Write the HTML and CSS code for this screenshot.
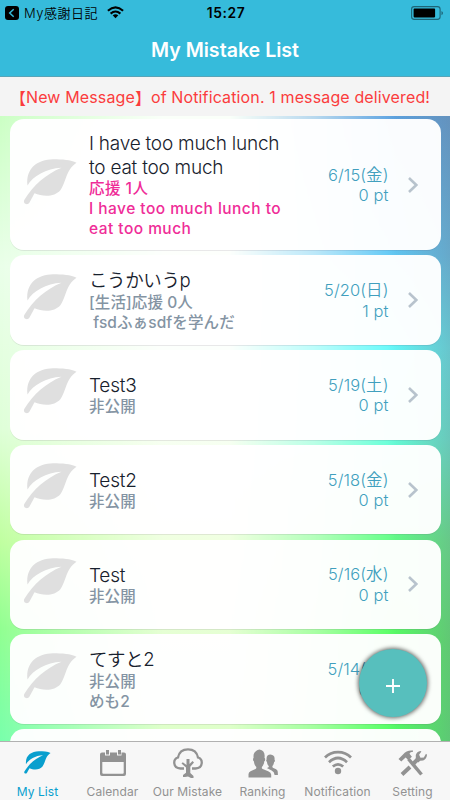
FILE: index.html
```html
<!DOCTYPE html>
<html lang="ja">
<head>
<meta charset="utf-8">
<title>My Mistake List</title>
<link rel="stylesheet" href="styles.css">
</head>
<body>
<svg class="defs" width="0" height="0" aria-hidden="true">
  <symbol id="leaf" viewBox="0 0 53 46" overflow="visible">
    <path d="M52.500 3.800C47 .8 38 .3 29 .3 14 .5 1.500 9 3.500 26.500 9 17 22 9.500 37.500 8.700 22 15 9 26.500.3 41-1.500 44.500 3.500 47 5.500 43.500L10.500 34.300C19 38 31 38 36.500 31 42.500 23 41.500 11 52.500 3.800Z"/>
  </symbol>
  <symbol id="chev" viewBox="0 0 12 18"><path d="M2 2L9.300 9 2 16" fill="none" stroke="currentColor" stroke-width="2.600"/></symbol>
</svg>
<div class="app">
  <header class="top">
    <div class="status">
      <div class="back">
        <svg width="14" height="14" viewBox="0 0 14 14"><rect width="14" height="14" rx="3"/><path d="M8.700 3.200L4.700 7l4 3.800" fill="none" stroke="#36bbdb" stroke-width="1.500"/></svg>
        <span class="back-label">My感謝日記</span>
        <svg class="wifi" width="17" height="13" viewBox="0 0 17 13"><g fill="none" stroke="#000" stroke-width="2.100"><path d="M.9 4.700Q8.500-1.900 16.100 4.700"/><path d="M3.600 7.600Q8.500 3.400 13.400 7.600"/></g><path d="M5.700 9.300Q8.500 7.200 11.300 9.300L8.500 12.200Z"/></svg>
      </div>
      <span class="clock">15:27</span>
      <svg class="battery" width="33" height="14" viewBox="0 0 33 14"><rect x=".6" y=".6" width="28.500" height="12.800" rx="2.600" fill="none" stroke="#1d6577" stroke-width="1.100"/><rect x="2.600" y="2.600" width="21.500" height="8.800" rx=".8"/><path d="M30.500 5v4.200q1.500-.8 1.500-2.100t-1.500-2.100" fill="#1d6577"/></svg>
    </div>
    <h1 class="title">My Mistake List</h1>
  </header>
  <div class="notice"><span class="bracket">【</span>New Message<span class="bracket">】</span><span>of Notification. 1 message delivered!</span></div>
  <main class="list">
    <article class="card tall">
      <svg class="leaf"><use href="#leaf"/></svg>
      <div class="body"><h2>I have too much lunch<br>to eat too much</h2><p class="pink">応援 1人<br>I have too much lunch to<br>eat too much</p></div>
      <div class="meta">6/15(金)<br>0 pt</div><svg class="chev"><use href="#chev"/></svg>
    </article>
    <article class="card">
      <svg class="leaf"><use href="#leaf"/></svg>
      <div class="body"><h2 class="kana">こうかいうp</h2><p>[生活]応援 0人<br>&nbsp;fsdふぁsdfを学んだ</p></div>
      <div class="meta">5/20(日)<br>1 pt</div><svg class="chev"><use href="#chev"/></svg>
    </article>
    <article class="card">
      <svg class="leaf"><use href="#leaf"/></svg>
      <div class="body"><h2>Test3</h2><p>非公開</p></div>
      <div class="meta">5/19(土)<br>0 pt</div><svg class="chev"><use href="#chev"/></svg>
    </article>
    <article class="card">
      <svg class="leaf"><use href="#leaf"/></svg>
      <div class="body"><h2>Test2</h2><p>非公開</p></div>
      <div class="meta">5/18(金)<br>0 pt</div><svg class="chev"><use href="#chev"/></svg>
    </article>
    <article class="card">
      <svg class="leaf"><use href="#leaf"/></svg>
      <div class="body"><h2>Test</h2><p>非公開</p></div>
      <div class="meta">5/16(水)<br>0 pt</div><svg class="chev"><use href="#chev"/></svg>
    </article>
    <article class="card">
      <svg class="leaf"><use href="#leaf"/></svg>
      <div class="body"><h2 class="kana">てすと2</h2><p>非公開<br>めも2</p></div>
      <div class="meta">5/14(月)<br>0 pt</div><svg class="chev"><use href="#chev"/></svg>
    </article>
    <article class="card"></article>
    <button class="fab" aria-label="Add"><svg width="14" height="14" viewBox="0 0 14 14"><path d="M7 0v14M0 7h14" stroke="#fff" stroke-width="1.900"/></svg></button>
  </main>
  <nav class="tabs">
    <a class="tab active"><svg class="tab-leaf" width="27" height="23" viewBox="0 0 53 46"><use href="#leaf" width="53" height="46"/></svg><span>My List</span></a>
    <a class="tab"><svg width="28" height="28" viewBox="0 0 28 28"><path fill-rule="evenodd" d="M3 3.500h3v3h5v-3h7v3h4.500v-3H25q2 0 2 2V25q0 2-2 2H3q-2 0-2-2V5.500q0-2 2-2zM3.300 13v10.800q0 1 1 1h19.400q1 0 1-1V13z"/><path d="M7 1h3v4.500H7zM19 1h3v4.500h-3z"/></svg><span>Calendar</span></a>
    <a class="tab"><svg width="30" height="30" viewBox="0 0 30 30"><path d="M11 20.500H7.500C-.5 20-.2 11 5 9.500 6 4 10 1.300 15 1.300S24 4 25 9.500C30.200 11 30.500 20 22.500 20.500H19" fill="none" stroke="currentColor" stroke-width="2.300"/><path d="M13.500 11h3v5l3-3 1.500 1.500-3.700 4.300v6.300l3.200 3v1.900h-2.500L15 28.500 12 29h-2V27l3-2.200v-5.300L8.500 15.500l1.300-1.300 3.700 2.800z"/></svg><span>Our Mistake</span></a>
    <a class="tab"><svg width="30" height="29" viewBox="0 0 30 29"><path d="M.5 28.500v-3.300q0-2 2-3l5-2.200q1-.5.8-2C6.500 16 6 14 6 12.500q-1-.5-1-2.300 0-1 .6-1.500C5 4 7.500 1.500 11.500.5c4 .5 5.700 3.700 5 8.200q.7.500.7 1.500 0 1.800-1 2.300c0 1.500-.6 3.500-2.300 5.500-.2 1.500 0 1.500.8 2l5.500 2.200q3 1.300 3 3.600v2.700z"/><path d="M18.800 19c1.200-.4 2.100-.8 2-2-1.200-1-1.700-2.500-1.800-4-1-.4-1-2-.4-2.600C18.200 7 19.800 5.800 22.500 5.500c3 .3 4.500 2 4 5 .7.700.5 2.200-.4 2.600-.2 1.500-.7 3-1.700 4 0 1.200 0 1.500 1 2q3.500 1.500 4 2.400.5.800.5 4.500h-3.300q-.2-3.300-3-4.500z"/></svg><span>Ranking</span></a>
    <a class="tab"><svg width="28" height="28" viewBox="0 0 28 28"><g fill="none" stroke="currentColor" stroke-width="2.700"><path d="M1 8.500C8 1.300 20 1.300 27 8.500"/><path d="M5 13.200q9-8.400 18 0"/><path d="M8.800 17.600q5.200-4.600 10.400 0"/></g><circle cx="14" cy="22" r="3.200"/></svg><span>Notification</span></a>
    <a class="tab"><svg width="29" height="28" viewBox="0 0 29 28"><path d="M.5 10L5 5.500C7.500 2 11 1 15 1.500v1.300c-2 .1-3 .8-3.500 2l2.400 3-3.600 3.300L7.600 8.500 3.300 12.500z"/><path d="M10.500 10L23.500 25.500" stroke="currentColor" stroke-width="3.500"/><path d="M4 25.500L12 18M15.500 14.500L20 10" stroke="currentColor" stroke-width="4"/><path d="M17.800 11.500V6q1-3.500 4.600-4l1 .5-2.300 3.300 1.400 3 3.300-.4L28 4.700l1 1.100q-.2 4-3.800 5.800l-3 .2-2 1.700z"/></svg><span>Setting</span></a>
  </nav>
</div>
</body>
</html>
```

FILE: styles.css
```css
* { box-sizing: border-box; }
body { margin: 0; font-family: Inter, "Noto Sans CJK JP", sans-serif; font-weight: 400; }
.defs { display: none; }
.app { width: 450px; height: 800px; display: flex; flex-direction: column; overflow: hidden; background: #fff; }
svg { flex: none; }

.top { height: 77px; background: #36bbdb; border-bottom: 1px solid #58a5b8; flex: none; }
.status { height: 25px; display: grid; grid-template-columns: 1fr auto 1fr; align-items: center; padding: 0 6px 0 5px; }
.back { display: flex; align-items: center; }
.back-label { margin-left: 5px; font-size: 13px; letter-spacing: .5px; font-weight: 350; line-height: 20px; white-space: nowrap; }
.wifi { margin-left: 9px; }
.clock { font-size: 13.800px; font-weight: 600; letter-spacing: .6px; padding-left: 3px; }
.battery { justify-self: end; }
.title { margin: 0; color: #fff; text-align: center; font-size: 19.600px; font-weight: 600; line-height: 51px; }

.notice { height: 39px; flex: none; background: #f4f4f4; color: #fb3c3d; display: flex; align-items: center; padding: 0 0 0 10px; font-size: 16px; letter-spacing: .13px; font-weight: 370; white-space: nowrap; }
.bracket { font-family: "Noto Sans CJK JP", sans-serif; width: 16px; line-height: 20px; }

.list { position: relative; flex: 1; min-height: 0; overflow: hidden; padding: 3px 9.500px 0 10px; display: flex; flex-direction: column; gap: 5.250px; isolation: isolate; background: linear-gradient(#fff 40%, #e9ffcd); }
.list::before, .list::after { content: ""; position: absolute; inset: 0; z-index: -1; }
.list::before { background: linear-gradient(#cbffc4, #eaffe9 24%, #dfffd8 50%, #c0ffa0 68%, #91ff91 82%, #78ffab); mask-image: linear-gradient(90deg, #000, rgba(0,0,0,.55) 18%, rgba(0,0,0,.1) 36%, rgba(0,0,0,.1)); }
.list::after { background: linear-gradient(90deg, transparent 86%, rgba(112,124,142,.42)), linear-gradient(#5ba2e0, #5fc8f5 22%, #61fafa 37%, #64ffd9 52%, #60ff83 68%, #55ff60 84%, #4fff62); mask-image: linear-gradient(90deg, transparent 51%, rgba(0,0,0,.42) 70%, #000 88%); }

.card { height: 89.500px; flex: none; border-radius: 14px; background: rgba(255,255,255,.967); box-shadow: 0 1px 0 rgba(100,80,110,.13); display: flex; align-items: center; padding-left: 14px; }
.tall { height: 131.200px; }
.leaf { width: 53px; height: 46px; margin-top: -7px; fill: #dfdfdf; overflow: visible; }
.tall .leaf { margin-top: -6px; }
.body { margin: 1px 0 0 12px; flex: 1; white-space: nowrap; }
.body h2 { margin: 1px 0 -1px; font-size: 19px; letter-spacing: -.23px; line-height: 24px; font-weight: 360; color: #17212d; }
.body .kana { margin: -1px 0 1px; font-size: 18.500px; letter-spacing: -.4px; font-weight: 350; }
.body p { margin: 0; font-size: 15.500px; line-height: 20px; font-weight: 460; letter-spacing: .1px; color: #8494a3; }
.body .pink { color: #ef2d98; letter-spacing: .46px; }
.meta { color: #419fbe; font-size: 16.500px; line-height: 20.500px; text-align: right; font-weight: 360; letter-spacing: .08px; margin-top: 1px; }
.chev { width: 12px; height: 18px; margin: 0 22px 0 18px; color: #b8c3cd; }
.fab { position: absolute; left: 359px; top: 533px; width: 68px; height: 68px; padding: 5px 0 0; border: 0; border-radius: 50%; background: #57bfbd; box-shadow: 0 0 4px 1px rgba(0,0,0,.6); display: grid; place-items: center; }

.tabs { height: 59px; flex: none; border-top: 1px solid #b1b1b1; background: #f7f7f7; display: grid; grid-template-columns: repeat(6, 1fr); }
.tab { display: flex; flex-direction: column; align-items: center; justify-content: flex-end; color: #929292; fill: currentColor; font-size: 12px; letter-spacing: .1px; white-space: nowrap; }
.tab svg { margin: auto 0; }
.tab .tab-leaf { margin: auto 0; position: relative; top: -1px; }
.tab span { line-height: 15px; padding-bottom: 1px; }
.active { color: #099fce; }
```
